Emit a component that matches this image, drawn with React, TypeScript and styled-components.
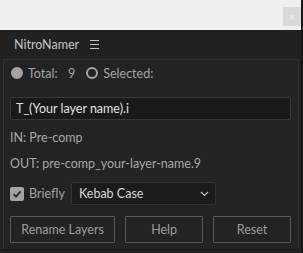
import styled, { createGlobalStyle } from "styled-components";

const GlobalStyle = createGlobalStyle`
  html, body {
    margin: 0;
    padding: 0;
    background: #f0f0f0;
  }
  * {
    box-sizing: border-box;
  }
`;

const Window = styled.div`
  width: 303px;
  height: 253px;
  display: flex;
  flex-direction: column;
  font-family: Lato, "Open Sans", sans-serif;
  font-size: 12.5px;
  overflow: hidden;
  border-right: 2px solid #161616;
  border-top-left-radius: 6px;
`;

const TitleStrip = styled.div`
  height: 30px;
  background: #f0f0f0;
  display: flex;
  justify-content: flex-end;
  align-items: flex-start;
  padding: 7px 0 0 0;
`;

const CloseButton = styled.div`
  width: 18px;
  height: 19px;
  background: #d9d9d9;
  color: #f4f4f4;
  font-size: 10px;
  line-height: 18px;
  text-align: center;
`;

const Body = styled.div`
  flex: 1;
  background: #212121;
  display: flex;
  flex-direction: column;
  padding: 0 2px 3px 3px;
`;

const PanelHeader = styled.div`
  height: 29px;
  display: flex;
  align-items: center;
  gap: 11px;
  padding-left: 11px;
  color: #c4c4c4;
`;

const Menu = styled.span`
  display: flex;
  flex-direction: column;
  gap: 3px;
  width: 9px;

  span {
    height: 1px;
    background: #c4c4c4;
  }
`;

const Panel = styled.div`
  flex: 1;
  background: #232323;
  border: 1px solid #313131;
  border-bottom-color: #151515;
  padding: 5px 6px 0 6px;
  display: flex;
  flex-direction: column;
  color: #a6a6a6;
`;

const Row = styled.div<{ $height: number; $mt?: number }>`
  display: flex;
  align-items: center;
  height: ${(p) => p.$height}px;
  margin-top: ${(p) => p.$mt ?? 0}px;
`;

const Radio = styled.span<{ $on?: boolean; $ml?: number }>`
  width: 12px;
  height: 12px;
  border-radius: 50%;
  margin-left: ${(p) => p.$ml ?? 1}px;
  background: ${(p) => (p.$on ? "#a3a3a3" : "transparent")};
  border: 2px solid #a3a3a3;
  flex-shrink: 0;
`;

const Label = styled.span<{ $ml?: number; $width?: number }>`
  margin-left: ${(p) => p.$ml ?? 5}px;
  width: ${(p) => (p.$width ? `${p.$width}px` : "auto")};
  color: #a3a3a3;
`;

const TextInput = styled.div`
  height: 23px;
  width: 100%;
  margin-right: 1px;
  background: #191919;
  border: 1px solid #383838;
  border-radius: 2px;
  display: flex;
  align-items: center;
  padding-left: 5px;
  color: #e2e2e2;
`;

const Info = styled.div<{ $mt: number }>`
  margin-top: ${(p) => p.$mt}px;
  height: 17px;
  line-height: 17px;
  color: #a8a8a8;
`;

const Checkbox = styled.span`
  width: 14px;
  height: 14px;
  border-radius: 2px;
  background: #a3a3a3;
  display: flex;
  align-items: center;
  justify-content: center;
  flex-shrink: 0;
`;

const Select = styled.div`
  width: 145px;
  height: 23px;
  background: #1b1b1b;
  border: 1px solid #333;
  border-radius: 2px;
  display: flex;
  align-items: center;
  justify-content: space-between;
  padding: 0 6px 0 7px;
  color: #d6d6d6;
`;

const ButtonRow = styled.div`
  display: flex;
  gap: 10px;
  margin-top: 11px;
  margin-right: 1px;
`;

const Button = styled.button<{ $width: number }>`
  width: ${(p) => p.$width}px;
  height: 27px;
  background: #232323;
  border: 1px solid #595959;
  border-radius: 1px;
  color: #9d9d9d;
  font-family: inherit;
  font-size: 12.5px;
  padding: 0;
`;

export default function App() {
  return (
    <>
      <GlobalStyle />
      <Window>
        <TitleStrip>
          <CloseButton>x</CloseButton>
        </TitleStrip>
        <Body>
          <PanelHeader>
            NitroNamer
            <Menu>
              <span />
              <span />
              <span />
            </Menu>
          </PanelHeader>
          <Panel>
            <Row $height={16} $mt={0}>
              <Radio $on />
              <Label $width={40}>Total:</Label>
              <Label $ml={0}>9</Label>
              <Radio $ml={11} />
              <Label>Selected:</Label>
            </Row>
            <Row $height={23} $mt={16}>
              <TextInput>T_(Your layer name).i</TextInput>
            </Row>
            <Info $mt={9}>IN: Pre-comp</Info>
            <Info $mt={9}>OUT: pre-comp_your-layer-name.9</Info>
            <Row $height={23} $mt={10}>
              <Checkbox>
                <svg width="10" height="10" viewBox="0 0 10 10">
                  <path d="M1.5 5.2 L4 7.6 L8.6 2.4" fill="none" stroke="#2a2a2a" strokeWidth="1.8" />
                </svg>
              </Checkbox>
              <Label $width={42}>Briefly</Label>
              <Select>
                Kebab Case
                <svg width="9" height="6" viewBox="0 0 9 6">
                  <path d="M1 1 L4.5 4.5 L8 1" fill="none" stroke="#bdbdbd" strokeWidth="1.2" />
                </svg>
              </Select>
            </Row>
            <ButtonRow>
              <Button $width={108}>Rename Layers</Button>
              <Button $width={80}>Help</Button>
              <Button $width={80}>Reset</Button>
            </ButtonRow>
          </Panel>
        </Body>
      </Window>
    </>
  );
}
